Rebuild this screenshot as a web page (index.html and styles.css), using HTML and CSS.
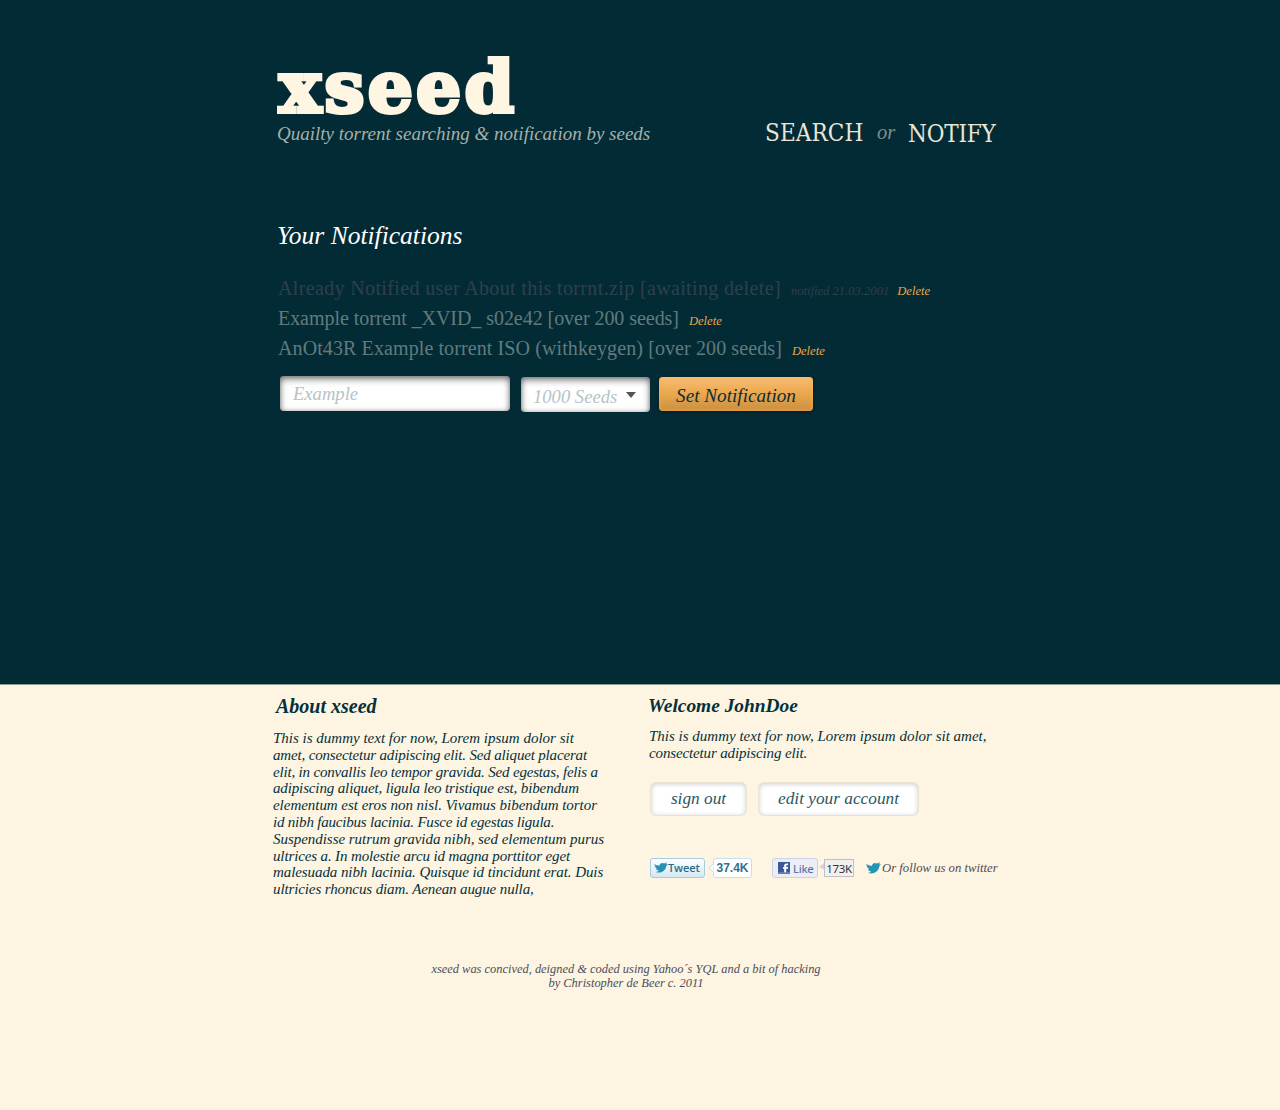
FILE: index.html
```html
<!DOCTYPE html>
<html lang="en">
<head>
<meta charset="utf-8">
<title>xseed</title>
<link rel="stylesheet" href="styles.css">
</head>
<body>
<svg class="defs" width="0" height="0"><defs>
<symbol id="bird" viewBox="0 0 15 12"><path d="M0.200 1.800C2 3.400 4 3.800 6 3.800 6 1.800 8.600 0 11 1.600L14 .2 13 2.400 15 2.300 13.200 4.500C12.800 9.400 7 13 1.800 10.800 3.600 10.700 4.600 10.200 5.100 9.400 3.400 9.200 2.500 8.400 2.100 7.400L3.200 7.100C1.600 6.400.7 5 .7 4.100L1.900 4.300C.9 3.700.300 2.800.2 1.800Z"/></symbol>
</defs></svg>
<main class="top">
  <div class="wrap">
    <header class="header">
      <div>
        <h1 class="logo">xseed</h1>
        <p class="tagline">Quailty torrent searching &amp; notification by seeds</p>
      </div>
      <nav class="nav"><a class="search">SEARCH</a><span class="or">or</span><a class="notify">NOTIFY</a></nav>
    </header>
    <section>
      <h2 class="title">Your Notifications</h2>
      <ul class="list">
        <li class="done"><span class="name">Already Notified user About this torrnt.zip [awaiting delete]</span><small class="date">notified 21.03.2001</small><a class="delete">Delete</a></li>
        <li><span class="name">Example torrent _XVID_ s02e42 [over 200 seeds]</span><a class="delete">Delete</a></li>
        <li><span class="name">AnOt43R Example torrent ISO (withkeygen) [over 200 seeds]</span><a class="delete">Delete</a></li>
      </ul>
      <div class="form">
        <div class="field query">Example</div>
        <div class="field seeds"><span>1000 Seeds</span><i class="caret"></i></div>
        <div class="submit">Set Notification</div>
      </div>
    </section>
  </div>
</main>
<footer class="bottom">
  <div class="columns">
    <section class="about">
      <h3>About xseed</h3>
      <p class="copy"><span>This is dummy text for now, Lorem ipsum dolor sit</span><span>amet, consectetur adipiscing elit. Sed aliquet placerat</span><span>elit, in convallis leo tempor gravida. Sed egestas, felis a</span><span>adipiscing aliquet, ligula leo tristique est, bibendum</span><span>elementum est eros non nisl. Vivamus bibendum tortor</span><span>id nibh faucibus lacinia. Fusce id egestas ligula.</span><span>Suspendisse rutrum gravida nibh, sed elementum purus</span><span>ultrices a. In molestie arcu id magna porttitor eget</span><span>malesuada nibh lacinia. Quisque id tincidunt erat. Duis</span><span>ultricies rhoncus diam. Aenean augue nulla,</span></p>
    </section>
    <section class="account">
      <h3>Welcome JohnDoe</h3>
      <p class="copy"><span>This is dummy text for now, Lorem ipsum dolor sit amet,</span><span>consectetur adipiscing elit.</span></p>
      <div class="actions"><a class="btn signout">sign out</a><a class="btn edit">edit your account</a></div>
      <div class="social">
        <a class="tweet"><svg width="14" height="11"><use href="#bird"/></svg>Tweet</a>
        <svg class="tip" width="6" height="10" viewBox="0 0 6 10"><path d="M5.500 .5L1 5l4.500 4.500" fill="#fff" stroke="#c5dcea"/></svg>
        <span class="tcount">37.4K</span>
        <a class="like"><svg width="12" height="12" viewBox="0 0 12 12"><path fill="#3b5998" d="M0 0h12v12H0z"/><path fill="#fff" d="M6.200 10.500V6.800H5V5h1.200V3.800C6.200 2.200 7 1.500 8.500 1.500H10v1.800H9c-.6 0-.8.200-.8.800V5H10v1.800H8.200v3.700z"/><path fill="#8c9fc7" d="M0 10.500h12v1H0z"/></svg>Like</a>
        <svg class="ltip" width="5" height="10" viewBox="0 0 5 10"><path d="M5 0v6.500L0 4z" fill="#d2d2d8"/></svg>
        <span class="lcount">173K</span>
        <a class="follow"><svg width="15" height="12"><use href="#bird"/></svg>Or follow us on twitter</a>
      </div>
    </section>
  </div>
  <p class="credits">xseed was concived, deigned &amp; coded using Yahoo´s YQL and a bit of hacking<br>by Christopher de Beer c. 2011</p>
</footer>
</body>
</html>
```
FILE: styles.css
```css
* { box-sizing: border-box; }
body { margin: 0; background: #fdf5e2; font-family: "Liberation Serif", serif; white-space: nowrap; }
h1, h2, h3, p, ul { margin: 0; padding: 0; font-weight: normal; }
.defs { display: block; }
.top { height: 685px; background: #032b35; border-bottom: 1px solid #8c9d96; }
.wrap { width: 720px; margin: 0 auto 0 277px; padding-top: 54px; }
.header { display: flex; justify-content: space-between; height: 89px; }
.logo { height: 70px; font: bold 71px/66px "DejaVu Serif", serif; letter-spacing: 3.200px; color: #fef6e3; -webkit-text-stroke: 4px #fef6e3; padding-left: 2px; }
.tagline { font-size: 19px; line-height: 20px; font-style: italic; color: #a5b0a9; }
.nav { display: flex; align-items: flex-start; padding-top: 66px; font: 24px/24px "DejaVu Serif Condensed", "DejaVu Serif", serif; color: #e9e6d6; }
.search { width: 112px; margin-top: 1px; letter-spacing: .1px; }
.or { width: 31px; font: italic 20.5px/24px "Liberation Serif", serif; color: #7d908e; }
.notify { width: 89px; margin-top: 2px; letter-spacing: -.2px; }
.title { margin-top: 77px; font-size: 25.5px; line-height: 31px; font-style: italic; color: #fff; }
.list { margin-top: 22px; padding-left: 1px; list-style: none; font-size: 20px; line-height: 30px; color: #617b7e; }
.list li { display: flex; align-items: baseline; height: 30px; }
.list li:nth-child(1) .name { letter-spacing: .36px; }
.list li:nth-child(2) .name { letter-spacing: -.05px; }
.list li:nth-child(3) .name { letter-spacing: .1px; }
.name { margin-right: 10px; }
.done { color: #303f4e; }
.date, .delete { font-size: 12.6px; font-style: italic; }
.date { margin-right: 8px; }
.delete { color: #eba64b; }
.form { display: flex; margin: 13px 0 0 3px; font-style: italic; font-size: 18.6px; }
.field { height: 35px; border-radius: 4px; background: #fff; color: #b5c3c6; line-height: 36px; box-shadow: inset 0 3px 7px rgba(0,0,0,.5), inset 0 0 4px rgba(0,0,0,.25); }
.query { width: 230px; padding-left: 13px; }
.seeds { display: flex; align-items: center; width: 129px; margin: 1px 9px 0 11px; padding: 3px 0 0 12px; line-height: 33px; }
.caret { margin: -2px 0 0 9px; border: 5px solid transparent; border-top: 6px solid #555; border-bottom: 0; }
.submit { width: 154px; height: 34px; margin-top: 1px; border-radius: 4px; background: linear-gradient(#f7bd74, #eda950 45%, #c98f40); box-shadow: inset 0 0 4px rgba(255,180,80,.7), 0 1px 4px rgba(0,0,0,.35); color: #092e36; font-size: 19.2px; line-height: 37px; text-align: center; }
.bottom { color: #05303a; font-style: italic; }
.columns { display: flex; height: 277px; padding-left: 273px; }
.about { width: 375px; padding-top: 9px; }
.about h3 { padding-left: 3px; margin-bottom: 12px; }
h3 { font-size: 20px; line-height: 24px; font-weight: bold; }
.copy { font-size: 15px; line-height: 16.8px; }
.copy span { display: block; }
.about .copy span:nth-child(2) { letter-spacing: -.17px; }
.about .copy span:nth-child(3) { letter-spacing: -.185px; }
.about .copy span:nth-child(4) { letter-spacing: -.137px; }
.about .copy span:nth-child(5) { letter-spacing: -.035px; }
.about .copy span:nth-child(6) { letter-spacing: -.2px; }
.about .copy span:nth-child(7) { letter-spacing: -.036px; }
.about .copy span:nth-child(8) { letter-spacing: -.135px; }
.about .copy span:nth-child(9) { letter-spacing: -.08px; }
.about .copy span:nth-child(10) { letter-spacing: -.116px; }
.account { padding-top: 9px; }
.account h3 { font-size: 19.4px; margin-bottom: 10px; }
.account .copy { padding-left: 1px; }
.account .copy span:nth-child(2) { letter-spacing: -.14px; }
.actions { display: flex; gap: 13px; margin: 21px 0 0 3px; }
.btn { height: 32px; border-radius: 5px; background: #fff; color: #2c5660; font-size: 17.300px; line-height: 32px; text-align: center; box-shadow: inset 0 1px 5px rgba(0,0,0,.2), 0 0 0 1px #e9e5d5; }
.signout { width: 95px; }
.edit { width: 159px; }
.social { display: flex; align-items: flex-start; height: 22px; margin: 43px 0 0 2px; font-style: normal; }
.tweet { display: flex; align-items: center; width: 55px; height: 20px; padding-left: 3px; border: 1px solid #a5cbdc; border-radius: 3px; background: linear-gradient(#fff, #d5e8f2); font: 600 11px "Open Sans", sans-serif; letter-spacing: -.1px; color: #286d8b; }
.tweet svg { margin-right: 0; }
.tweet svg, .follow svg { fill: #2593b8; }
.tip { margin: 5px -1px 0 3px; position: relative; z-index: 1; }
.tcount { width: 39px; height: 20px; border: 1px solid #c5dfec; border-radius: 3px; background: #fff; font: bold 12px/18px "Liberation Sans", sans-serif; color: #346f8d; text-align: center; }
.like { display: flex; align-items: center; gap: 3px; width: 46px; height: 20px; margin-left: 20px; padding: 1px 0 0 5px; border: 1px solid #ccd2e4; border-radius: 3px; background: #eceef5; font: 11.5px "Noto Sans", sans-serif; letter-spacing: -.3px; color: #4b66a3; }
.like svg { margin-top: -1px; }
.ltip { margin: 5px 0 0 1px; }
.lcount { width: 30px; height: 18px; margin-top: 1px; border: 1px solid #c1bfc7; background: #f2f0ef; font: 11.5px/18px "Noto Sans", sans-serif; color: #333; text-align: center; letter-spacing: -.3px; }
.follow { display: flex; align-items: center; gap: 1px; height: 20px; margin-left: 12px; color: #4c4d59; font: italic 12.700px/20px "Liberation Serif", serif; }
.credits { width: 390px; margin-left: 431px; color: #4c4d59; font-size: 12.430px; line-height: 14px; text-align: center; }
```
